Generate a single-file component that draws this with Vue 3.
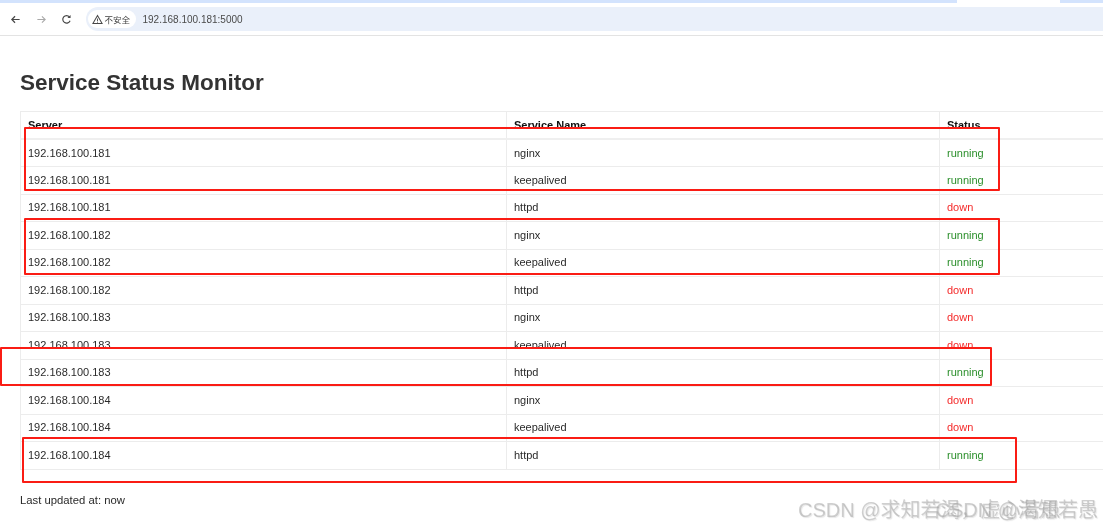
<script setup>
const rows = [
  ['192.168.100.181', 'nginx', 'running'],
  ['192.168.100.181', 'keepalived', 'running'],
  ['192.168.100.181', 'httpd', 'down'],
  ['192.168.100.182', 'nginx', 'running'],
  ['192.168.100.182', 'keepalived', 'running'],
  ['192.168.100.182', 'httpd', 'down'],
  ['192.168.100.183', 'nginx', 'down'],
  ['192.168.100.183', 'keepalived', 'down', true],
  ['192.168.100.183', 'httpd', 'running'],
  ['192.168.100.184', 'nginx', 'down'],
  ['192.168.100.184', 'keepalived', 'down'],
  ['192.168.100.184', 'httpd', 'running'],
]
const marks = [
  { left: 24, top: 127, width: 976, height: 64 },
  { left: 24, top: 218, width: 976, height: 57 },
  { left: 0, top: 347, width: 992, height: 39 },
  { left: 22, top: 437, width: 995, height: 46 },
]
</script>

<template>
  <div class="screen">
    <div class="tabstrip">
      <div class="tab-gap"></div>
    </div>
    <header class="toolbar">
      <button class="nav" aria-label="Back">
        <svg viewBox="0 0 12 12" width="11" height="11"><path d="M10.5 6H2M5.5 2.5 2 6l3.5 3.5" fill="none" stroke="#474747" stroke-width="1.3"/></svg>
      </button>
      <button class="nav" aria-label="Forward">
        <svg viewBox="0 0 12 12" width="11" height="11"><path d="M1.5 6H10M6.5 2.5 10 6l-3.5 3.5" fill="none" stroke="#a9a9a9" stroke-width="1.2"/></svg>
      </button>
      <button class="nav" aria-label="Reload">
        <svg viewBox="0 0 12 12" width="11" height="11"><path d="M9.9 7.3A4.1 4.1 0 1 1 9.2 3.2" fill="none" stroke="#474747" stroke-width="1.3"/><path d="M10.4 1v3.4H7z" fill="#474747"/></svg>
      </button>
      <div class="omnibox">
        <span class="chip">
          <svg viewBox="0 0 12 12" width="11" height="11"><path d="M6 1.6 11 10.4H1z" fill="none" stroke="#474747" stroke-width="1.1"/><path d="M6 5v2.8M6 8.5v.9" stroke="#474747" stroke-width="1"/></svg>
          <span>不安全</span>
        </span>
        <span class="url">192.168.100.181:5000</span>
      </div>
    </header>

    <main class="page">
      <h1>Service Status Monitor</h1>
      <table>
        <colgroup>
          <col class="c1" /><col class="c2" /><col class="c3" />
        </colgroup>
        <thead>
          <tr>
            <th><span class="cut">Server</span></th>
            <th><span class="cut">Service Name</span></th>
            <th><span class="cut">Status</span></th>
          </tr>
        </thead>
        <tbody>
          <tr v-for="(r, i) in rows" :key="i">
            <td><span :class="{ cut: r[3] }">{{ r[0] }}</span></td>
            <td><span :class="{ cut: r[3] }">{{ r[1] }}</span></td>
            <td :class="r[2]"><span :class="{ cut: r[3] }">{{ r[2] }}</span></td>
          </tr>
        </tbody>
      </table>
      <p class="updated">Last updated at: now</p>
    </main>

    <div
      v-for="(m, i) in marks"
      :key="i"
      class="mark"
      :style="{ left: m.left + 'px', top: m.top + 'px', width: m.width + 'px', height: m.height + 'px' }"
    ></div>

    <div class="wm wm-a">CSDN @求知若渴，虚心若愚</div>
    <div class="wm wm-b">CSDN @渴知若愚</div>
  </div>
</template>

<style scoped>
.screen {
  position: relative;
  width: 1103px;
  height: 530px;
  overflow: hidden;
  background: #fff;
  font-family: "Liberation Sans", Arial, sans-serif;
  filter: blur(0.4px);
}
.tabstrip {
  height: 3px;
  background: #d3e3fd;
  display: flex;
  justify-content: flex-end;
  padding-right: 43px;
}
.tab-gap {
  width: 103px;
  height: 3px;
  background: #fff;
}
.toolbar {
  height: 33px;
  box-sizing: border-box;
  display: flex;
  align-items: center;
  padding: 0 0 0 3px;
  background: #fff;
  border-bottom: 1px solid #e3e3e3;
}
.nav {
  width: 25.5px;
  height: 24px;
  padding: 0;
  border: 0;
  background: none;
  display: flex;
  align-items: center;
  justify-content: center;
}
.omnibox {
  flex: 1;
  height: 24px;
  margin-left: 6px;
  padding-left: 2px;
  display: flex;
  align-items: center;
  background: #eaf0fa;
  border-radius: 12px 0 0 12px;
}
.chip {
  height: 18px;
  width: 48px;
  box-sizing: border-box;
  padding-left: 4px;
  display: flex;
  align-items: center;
  gap: 2px;
  background: #fff;
  border-radius: 9px;
  font: 8.5px "Noto Sans CJK SC", sans-serif;
  color: #444;
}
.url {
  margin-left: 7px;
  font-size: 10px;
  color: #4a4a4a;
}
.page {
  padding: 34px 0 0 20px;
}
h1 {
  margin: 0 0 15px;
  height: 26px;
  line-height: 26px;
  font-size: 22.5px;
  font-weight: 700;
  color: #333;
}
table {
  width: 1100px;
  table-layout: fixed;
  border-collapse: collapse;
  font-size: 11px;
  line-height: 13px;
  color: #2a2a2a;
}
.c1 { width: 486px; }
.c2 { width: 433px; }
th, td {
  height: 27.5px;
  padding: 6.5px 7px 0;
  box-sizing: border-box;
  border: 1px solid #ececec;
  text-align: left;
  vertical-align: top;
}
th {
  color: #111;
  font-weight: 700;
  border-bottom: 2px solid #efefef;
}
span.cut {
  display: block;
  height: 10px;
  overflow: hidden;
}
.running { color: #2b8f2b; }
.down { color: #f42a2a; }
.updated {
  margin: 24px 0 0;
  font-size: 11.3px;
  color: #2a2a2a;
}
.mark {
  position: absolute;
  box-sizing: border-box;
  border: 2.5px solid #fa1c14;
  border-radius: 1px;
}
.wm {
  position: absolute;
  top: 497px;
  font-size: 20px;
  line-height: 26px;
  white-space: nowrap;
  color: rgba(150, 150, 150, 0.45);
  text-shadow: 1px 1px 1px rgba(215, 215, 215, 0.6);
  font-family: "Liberation Sans", "Noto Sans CJK SC", sans-serif;
}
.wm-a { left: 798px; }
.wm-b { right: 5px; }
</style>
<style>
html, body { background: #fff; overflow: hidden; }
</style>
